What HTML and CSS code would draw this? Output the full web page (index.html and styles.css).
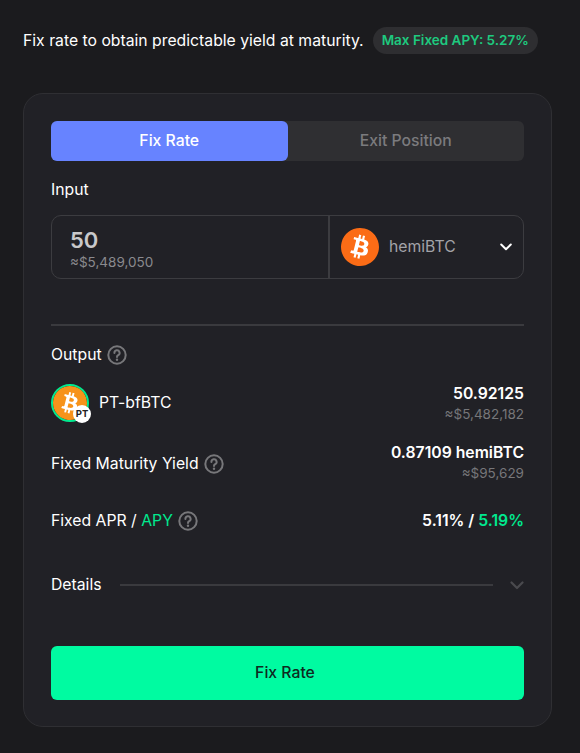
FILE: index.html
```html
<!DOCTYPE html>
<html lang="en">
<head>
<meta charset="utf-8">
<title>Fix Rate</title>
<link rel="stylesheet" href="styles.css">
</head>
<body>
<svg class="defs" width="0" height="0" aria-hidden="true">
  <defs>
    <path id="btc" d="M23.638 14.904c-1.602 6.43-8.113 10.34-14.542 8.736C2.67 22.05-1.244 15.525.362 9.105 1.962 2.67 8.475-1.243 14.9.358c6.43 1.605 10.342 8.115 8.738 14.548v-.002zm-6.35-4.613c.24-1.59-.974-2.45-2.64-3.03l.54-2.153-1.315-.33-.525 2.107c-.345-.087-.705-.167-1.064-.25l.526-2.127-1.32-.33-.54 2.165c-.285-.067-.565-.132-.84-.2l-1.815-.45-.35 1.407s.975.225.955.236c.535.136.63.486.615.766l-1.477 5.92c-.075.166-.24.406-.614.314.015.02-.96-.24-.96-.24l-.66 1.51 1.71.426.93.242-.54 2.19 1.32.327.54-2.17c.36.1.705.19 1.05.273l-.51 2.154 1.32.33.545-2.19c2.24.427 3.93.257 4.64-1.774.57-1.637-.03-2.58-1.217-3.196.854-.193 1.5-.76 1.68-1.93h.01zm-3.01 4.22c-.404 1.64-3.157.75-4.05.53l.72-2.9c.896.23 3.757.67 3.33 2.37zm.41-4.24c-.37 1.49-2.662.735-3.405.55l.654-2.64c.744.18 3.137.524 2.75 2.084v.006z"/>
    <g id="help">
      <circle cx="10" cy="10" r="8.7" fill="none" stroke="currentColor" stroke-width="2"/>
      <path d="M7.4 7.900a2.600 2.600 0 1 1 3.800 2.300c-.8.450-1.200.9-1.200 1.700" fill="none" stroke="currentColor" stroke-width="2" stroke-linecap="round"/>
      <circle cx="10" cy="14.800" r="1.200" fill="currentColor"/>
    </g>
  </defs>
</svg>

<header class="intro">
  <p class="intro-text">Fix rate to obtain predictable yield at maturity.</p>
  <span class="pill">Max Fixed APY: 5.27%</span>
</header>

<main class="card">
  <div class="tabs">
    <button class="tab tab-active">Fix Rate</button>
    <button class="tab">Exit Position</button>
  </div>

  <div class="label input-label">Input</div>
  <div class="input-box">
    <div class="amount">
      <div class="amount-value">50</div>
      <div class="amount-usd">≈$5,489,050</div>
    </div>
    <div class="token-select">
      <svg class="token-icon" viewBox="0 0 24 24"><circle cx="12" cy="12" r="9" fill="#fff"/><use href="#btc" fill="#fb6c16"/></svg>
      <span class="token-name">hemiBTC</span>
      <svg class="chev" viewBox="0 0 12 8"><path d="M1.2 1.5 6 6.2l4.8-4.700" fill="none" stroke="#fff" stroke-width="2" stroke-linecap="round" stroke-linejoin="round"/></svg>
    </div>
  </div>

  <div class="divider"></div>

  <div class="label label-help output-label"><span>Output</span><svg class="help" viewBox="0 0 20 20"><use href="#help"/></svg></div>

  <div class="row row-token">
    <div class="pt-token">
      <span class="pt-icon">
        <svg class="pt-btc" viewBox="0 0 24 24"><circle cx="12" cy="12" r="9" fill="#fff"/><use href="#btc" fill="#f7931a"/></svg>
        <span class="pt-badge">PT</span>
      </span>
      <span class="label">PT-bfBTC</span>
    </div>
    <div class="values">
      <div class="value">50.92125</div>
      <div class="usd">≈$5,482,182</div>
    </div>
  </div>

  <div class="row row-yield">
    <div class="label label-help yield-label"><span>Fixed Maturity Yield</span><svg class="help" viewBox="0 0 20 20"><use href="#help"/></svg></div>
    <div class="values">
      <div class="value">0.87109 hemiBTC</div>
      <div class="usd">≈$95,629</div>
    </div>
  </div>

  <div class="row row-apr">
    <div class="label label-help"><span>Fixed APR / <span class="green">APY</span></span><svg class="help" viewBox="0 0 20 20"><use href="#help"/></svg></div>
    <div class="value">5.11% / <span class="green">5.19%</span></div>
  </div>

  <div class="details">
    <span class="label">Details</span>
    <span class="details-line"></span>
    <svg class="details-chev" viewBox="0 0 14 9"><path d="M1.5 1.500 7 7l5.500-5.500" fill="none" stroke="#4a4a4e" stroke-width="2.200" stroke-linecap="round" stroke-linejoin="round"/></svg>
  </div>

  <button class="submit">Fix Rate</button>
</main>
</body>
</html>
```

FILE: styles.css
```css
* { box-sizing: border-box; }
html, body { margin: 0; padding: 0; }
body {
  width: 580px;
  height: 753px;
  overflow: hidden;
  background: #1b1b1e;
  color: #fff;
  font-family: Inter, "Liberation Sans", sans-serif;
  font-size: 15.75px;
  line-height: 20px;
}
.defs { position: absolute; }
.intro {
  display: flex;
  align-items: flex-start;
  gap: 9px;
  height: 93px;
  padding: 27px 0 0 23px;
}
.intro-text { margin: 0; font-size: 15.75px; line-height: 27px; color: #fff; }
.pill {
  height: 27px;
  line-height: 27px;
  padding: 0 9px;
  border-radius: 14px;
  background: #2e2e31;
  color: #1ec97f;
  font-size: 13.5px;
  font-weight: 600;
}
.card {
  width: 529px;
  height: 634px;
  margin-left: 23px;
  padding: 27px;
  background: #212126;
  border: 1px solid #2f2f33;
  border-radius: 20px;
}
.tabs {
  display: flex;
  height: 40px;
  background: #2f2f32;
  border-radius: 6px;
}
.tab {
  flex: 1;
  border: 0;
  padding: 0;
  background: transparent;
  color: #7b7b7e;
  font: 500 15.75px/40px Inter, "Liberation Sans", sans-serif;
  border-radius: 6px;
}
.tab-active { background: #6783ff; color: #fff; }
.label { color: #fff; font-size: 15.75px; line-height: 20px; }
.label-help { display: flex; align-items: center; gap: 5px; }
.input-label { margin-top: 19px; }
.input-box {
  display: flex;
  height: 64px;
  margin-top: 15px;
  border: 1px solid #3c3c40;
  border-radius: 10px;
}
.amount {
  width: 278px;
  padding: 11px 0 0 18px;
  border-right: 2px solid #3c3c40;
}
.amount-value { color: #c9c9cb; font-size: 22px; font-weight: 600; line-height: 26px; }
.amount-usd { color: #8a8a8e; font-size: 13.5px; line-height: 16px; margin-top: 1px; }
.token-select {
  flex: 1;
  display: flex;
  align-items: center;
  padding: 0 11px;
}
.token-icon { width: 38px; height: 38px; flex: none; }
.token-name { margin-left: 10px; color: #a3a3a8; font-size: 15.75px; }
.chev { width: 12px; height: 8px; margin-left: auto; }
.divider { height: 2px; margin-top: 45px; background: #3a3a3e; }
.output-label { margin-top: 19px; }
.help { width: 20px; height: 20px; color: #77777a; flex: none; }
.row { display: flex; justify-content: space-between; align-items: center; }
.row-token { margin-top: 16px; height: 44px; }
.row-yield { margin-top: 17px; height: 40px; }
.yield-label { padding-top: 4px; }
.row-apr { margin-top: 21px; height: 36px; }
.pt-token { display: flex; align-items: center; gap: 10px; }
.pt-icon {
  position: relative;
  width: 38px;
  height: 38px;
  border: 2px solid #00e98f;
  border-radius: 50%;
  flex: none;
}
.pt-btc { display: block; width: 34px; height: 34px; }
.pt-badge {
  position: absolute;
  right: -4px;
  bottom: -3px;
  width: 18px;
  height: 18px;
  border-radius: 50%;
  background: #fff;
  color: #222;
  font-size: 9.5px;
  font-weight: 700;
  line-height: 18px;
  text-align: center;
}
.values { text-align: right; }
.value { color: #fff; font-size: 15.75px; font-weight: 600; line-height: 20px; }
.usd { color: #77777a; font-size: 13.5px; line-height: 16px; margin-top: 2px; }
.green { color: #00e98f; }
.details {
  display: flex;
  align-items: center;
  margin-top: 36px;
  height: 20px;
}
.details-line { flex: 1; height: 2px; margin: 0 17px 0 18px; background: #3a3a3e; }
.details-chev { width: 14px; height: 9px; }
.submit {
  display: block;
  width: 100%;
  height: 54px;
  margin-top: 51px;
  padding: 0 5px 0 0;
  border: 0;
  border-radius: 6px;
  background: #00fba1;
  color: #0e2a1f;
  font: 500 15.75px/54px Inter, "Liberation Sans", sans-serif;
}
```
